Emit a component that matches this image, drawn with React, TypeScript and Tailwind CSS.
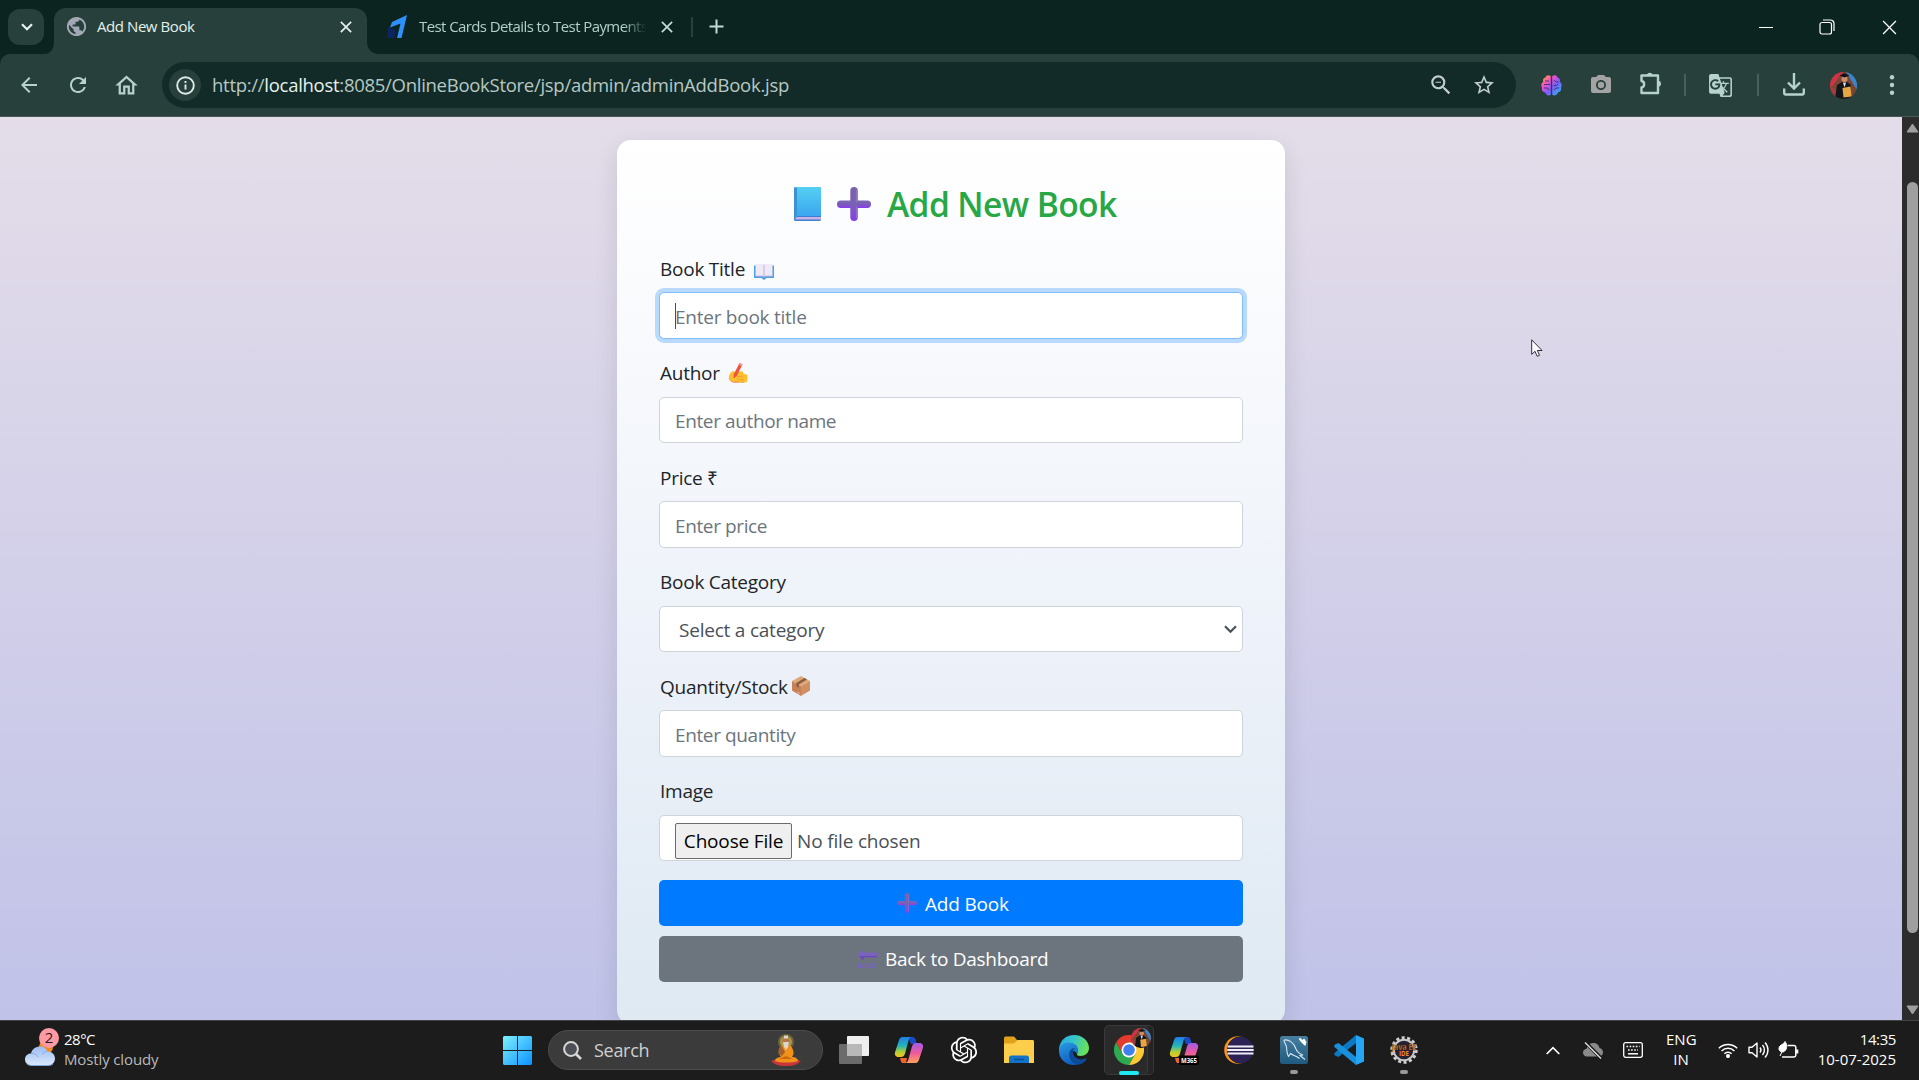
import type { ReactNode } from "react";
import {
  MdArrowBack,
  MdGTranslate,
  MdOutlineHome,
  MdPhotoCamera,
  MdPublic,
  MdRefresh,
  MdStarBorder,
  MdZoomOut,
} from "react-icons/md";
import { RiOpenaiFill } from "react-icons/ri";

function Cross({ size, width, color }: { size: number; width: number; color: string }) {
  return (
    <svg width={size} height={size} viewBox="0 0 14 14" stroke={color} strokeWidth={width} fill="none">
      <path d="M1 1l12 12M13 1L1 13" />
    </svg>
  );
}

/* ---------- emoji ---------- */

function PlusEmoji({ className }: { className: string }) {
  return (
    <svg className={className} viewBox="0 0 34 34">
      <defs>
        <linearGradient id="plusFill" x1="0" y1="0" x2="0" y2="1">
          <stop offset="0" stopColor="#7b62a8" />
          <stop offset="0.5" stopColor="#7a62b4" />
          <stop offset="1" stopColor="#8540ea" />
        </linearGradient>
        <linearGradient id="plusBar" x1="0" y1="0" x2="0" y2="1">
          <stop offset="0" stopColor="#7c6ab0" />
          <stop offset="0.5" stopColor="#7a5cba" />
          <stop offset="1" stopColor="#8a3df0" />
        </linearGradient>
      </defs>
      <rect x="0" y="13.500" width="34" height="7.500" rx="3.700" fill="url(#plusBar)" />
      <rect x="13.300" y="0" width="7.500" height="34" rx="3.700" fill="url(#plusFill)" />
      <path d="M19.500 3v12M19.500 20v11" stroke="#9a84cf" strokeWidth="1.200" strokeLinecap="round" opacity="0.600" />
    </svg>
  );
}

function BlueBook({ className }: { className: string }) {
  return (
    <svg className={className} viewBox="0 0 27 34">
      <defs>
        <linearGradient id="bookFill" x1="0" y1="0" x2="0" y2="1">
          <stop offset="0" stopColor="#54d0f2" />
          <stop offset="1" stopColor="#3ba6f0" />
        </linearGradient>
      </defs>
      <rect x="0" y="0" width="27" height="34" rx="1.600" fill="#3f7fcf" />
      <rect x="1.500" y="30" width="25.500" height="2.500" fill="#cbb2e6" />
      <rect x="1" y="0" width="26" height="29" rx="1.200" fill="url(#bookFill)" />
      <rect x="0" y="0.600" width="3" height="30" rx="1.200" fill="#3c93cf" />
    </svg>
  );
}

function OpenBook({ className }: { className: string }) {
  return (
    <svg className={className} viewBox="0 0 20 16">
      <path d="M0 1.500h20V14h-7.500l-2.500 2-2.500-2H0z" fill="#4b9fe3" />
      <path d="M1.500 0H9.300L10 .8l.7-.8h7.800v12.300h-7.200L10 13l-1.300-.7H1.500z" fill="#f0e9f8" />
      <path d="M10 .8V13" stroke="#c9badb" strokeWidth="1.200" />
      <path d="M1.500 12.200h7.200l1.300 1.200 1.300-1.200h7.200" stroke="#a7a3dc" fill="none" />
    </svg>
  );
}

function WritingHand({ className }: { className: string }) {
  return (
    <svg className={className} viewBox="0 0 20 20">
      <path d="M1 15.500C.5 12 2.500 8.500 5.500 8l3 1.500L13 8.200c2-.4 3 1 2 2.300l3.600 1.100c1.400.8 1 2 .6 2.800.8 1 .6 2-.2 2.600.5 1.400-.4 2.400-2 2.500L9 19.600C5 20 1.500 18.800 1 15.500z" fill="#fcbf2d" />
      <path d="M9 13.500l6 .3M9 16l7 .8M7 18.500l9 .8" stroke="#f29b3a" strokeWidth="0.900" />
      <path d="M11.500 0l3 1.500L8.800 13l-3.300 2.500.2-4z" fill="#ee5540" />
      <path d="M11.500 0l3 1.500-.9 1.800-3-1.500z" fill="#f58fa0" />
      <path d="M1 15.500C2.500 19 6 20 10 19.600" stroke="#f0938a" fill="none" strokeWidth="0.900" />
    </svg>
  );
}

function BoxEmoji({ className }: { className: string }) {
  return (
    <svg className={className} viewBox="0 0 18 20">
      <path d="M9 0l9 5-9 5.200L0 5z" fill="#dfa878" />
      <path d="M0 5l9 5.200V20l-9-5.500z" fill="#c98056" />
      <path d="M9 10.200L18 5v9.500L9 20z" fill="#d08f61" />
      <path d="M12.500 2L4.200 7v3.300l2.600 1.500V8.500L15 3.400z" fill="#8f5c43" />
      <path d="M5.500 15.500l2 1.200v1.500l-2-1.200z" fill="#e9b7c0" />
    </svg>
  );
}

function BackEmoji({ className }: { className: string }) {
  return (
    <svg className={className} viewBox="0 0 20 20">
      <path d="M0 5.800L6.500.2v3.300H20v4.800H6.500V11.500z" fill="#7a62bd" />
      <path d="M2 7.500l4.500 4V8.300H20V7H6.500z" fill="#6a48b8" />
      <text x="0.500" y="19" fontSize="7.500" fontWeight="600" textLength="19" lengthAdjust="spacingAndGlyphs" fill="#7a5fc6">
        BACK
      </text>
    </svg>
  );
}

/* ---------- browser frame ---------- */

function TabStrip() {
  return (
    <div className="flex h-[54px] items-start bg-[#0b2420] pt-2 pl-2">
      <button className="mt-px flex h-9 w-9 items-center justify-center rounded-[12px] bg-[#28403b]">
        <svg className="ml-px" width="12" height="8" viewBox="0 0 12 8" fill="none" stroke="#e8f3ef" strokeWidth="2.200">
          <path d="M1 1.200l5 5 5-5" />
        </svg>
      </button>
      <svg className="mt-[33px] h-[13px] w-[10px]" viewBox="0 0 10 13">
        <path d="M0 13C6 13 10 9 10 0v13z" fill="#28403b" />
      </svg>
      <div className="flex h-[46px] w-[313px] items-center rounded-t-[12px] bg-[#28403b] pr-[15px] pb-[9px] pl-[11px]">
        <MdPublic className="h-[23px] w-[23px] text-[#a3a9b4]" />
        <span className="ml-[9px] text-[15px] tracking-[-0.43px] whitespace-nowrap text-[#e3f0ec]">Add New Book</span>
        <span className="ml-auto">
          <Cross size={12} width={2} color="#e3f0ec" />
        </span>
      </div>
      <svg className="mt-[33px] h-[13px] w-[13px]" viewBox="0 0 13 13">
        <path d="M13 13C5 13 0 9 0 0v13z" fill="#28403b" />
      </svg>
      <div className="flex h-[37px] items-center pl-[7px]">
        <svg width="20" height="23" viewBox="0 0 20 23">
          <path d="M1 12l8 3-2 8H0z" fill="#0c2560" />
          <path d="M20 0l-5.500 23H10l3.500-14.500L3 12.500 5 7z" fill="#2f8ffb" />
        </svg>
        <span className="ml-3 w-[232px] text-[15px] tracking-[-0.59px] whitespace-nowrap text-[#b3cfc9] [mask-image:linear-gradient(to_right,black_88%,transparent_98%)]">
          Test Cards Details to Test Payments
        </span>
        <span className="ml-[10px]">
          <Cross size={12} width={2} color="#c0dcd5" />
        </span>
        <span className="ml-[18px] h-5 w-[2px] bg-[#28403b]" />
        <svg className="ml-4" width="15" height="15" viewBox="0 0 15 15" stroke="#c0dcd5" strokeWidth="2">
          <path d="M7.500 .5v14M.5 7.500h14" />
        </svg>
      </div>
      <div className="ml-auto flex h-[38px] items-center pr-[22px]">
        <span className="h-px w-[14px] bg-white" />
        <svg className="ml-[46px]" width="16" height="16" viewBox="0 0 16 16" fill="none" stroke="white" strokeWidth="1.200">
          <rect x="1" y="3.500" width="11.500" height="11.500" rx="2" />
          <path d="M4 1h7.500a3.500 3.500 0 0 1 3.500 3.500V12" />
        </svg>
        <span className="ml-[47px]">
          <Cross size={15} width={1.2} color="white" />
        </span>
      </div>
    </div>
  );
}

function BrainIcon() {
  return (
    <svg width="21" height="21" viewBox="0 0 21 21">
      <defs>
        <linearGradient id="brain" gradientUnits="userSpaceOnUse" x1="2" y1="2" x2="19" y2="19">
          <stop offset="0" stopColor="#ff9a3c" />
          <stop offset="0.300" stopColor="#ee4fd0" />
          <stop offset="0.600" stopColor="#7b5cff" />
          <stop offset="1" stopColor="#2fb0f5" />
        </linearGradient>
      </defs>
      <path d="M9.800 1.200C8-.3 5 .2 4.500 2.500 2 3 1.500 5.500 2.300 7 0 8 0 11 1 12.500c-.6 3 1 4.500 3 4.700.5 2.800 4 4.300 5.800 2.500z" fill="url(#brain)" />
      <path d="M11.200 1.200C13-.3 16 .2 16.500 2.500c2.500.5 3 3 2.200 4.500 2.300 1 2.300 4 1.300 5.500.6 3-1 4.500-3 4.700-.5 2.800-4 4.300-5.800 2.500z" fill="url(#brain)" />
      <path d="M4 6h4M3 9.500h6M3 13h3.500l1.500 2M13 5l2 2h2.500M12.500 10.500h3l1.500-1.500M13 15l2-2h3" stroke="#28305a" strokeWidth="0.800" fill="none" />
    </svg>
  );
}

function Avatar({ size, id }: { size: number; id: string }) {
  return (
    <svg width={size} height={size} viewBox="0 0 27 27">
      <clipPath id={id}>
        <circle cx="13.500" cy="13.500" r="13.500" />
      </clipPath>
      <g clipPath={`url(#${id})`}>
        <rect width="27" height="27" fill="#7a4634" />
        <path d="M0 0h13L0 17z" fill="#cf3346" />
        <path d="M16 0h11v18z" fill="#3a86cc" />
        <path d="M5 27l2-14 5-3h5l4 3v14z" fill="#15151c" />
        <path d="M0 13l6 6-2 8H0z" fill="#a33c40" />
        <circle cx="14.500" cy="7" r="3" fill="#c98f6c" />
        <path d="M9.500 3.500l5-2.200 5 2.200-5 2z" fill="#101016" />
        <path d="M13 10.500h3l-1.500 5z" fill="#e8e8ee" />
        <path d="M12.500 16l8-1.500 1 10-8 1z" fill="#e8a544" />
      </g>
    </svg>
  );
}

function Toolbar() {
  return (
    <div className="bg-[#0b2420]">
      <div className="flex h-[63px] items-center rounded-t-[10px] border-b border-[#47575a] bg-[#28403b] pl-[17px] text-[#b5d2cb]">
        <MdArrowBack className="h-6 w-6" />
        <MdRefresh className="ml-[25px] h-6 w-6" />
        <MdOutlineHome className="ml-[23px] h-[27px] w-[27px]" />
        <div className="ml-[22px] flex h-[46px] w-[1354px] items-center rounded-full bg-[#122b28] pr-[20px] pl-[7px]">
          <span className="flex h-8 w-8 items-center justify-center rounded-full bg-[#28403b]">
            <svg width="19" height="19" viewBox="0 0 19 19" fill="none" stroke="#dceae6" strokeWidth="1.900">
              <circle cx="9.500" cy="9.500" r="8.300" />
              <path d="M9.500 8.500v5M9.500 5v2" />
            </svg>
          </span>
          <span className="ml-[11px] text-[18.5px] tracking-[-0.28px] whitespace-nowrap text-[#b7c8c4]">
            http://<span className="text-[#e6f2ef]">localhost</span>:8085/OnlineBookStore/jsp/admin/adminAddBook.jsp
          </span>
          <MdZoomOut className="ml-auto h-[26px] w-[26px] text-[#c3cfcc]" />
          <MdStarBorder className="ml-[18px] h-6 w-6 text-[#c3cfcc]" />
        </div>
        <span className="ml-[25px]">
          <BrainIcon />
        </span>
        <MdPhotoCamera className="ml-[27px] h-[24px] w-[24px] text-[#a3a3a3]" />
        <svg className="mb-[4px] ml-[26px]" width="24" height="24" viewBox="0 0 24 24" fill="none" stroke="#b5d2cb" strokeWidth="2.400" strokeLinejoin="round">
          <path d="M2.500 4.500h16.500v17.500H2.500v-5.500c3.500-.5 3.500-6 0-6.500z" />
          <path d="M8.500 4a2.500 2.500 0 0 1 4.500 0zM19.500 10.500a2.300 2.300 0 0 1 0 4.500z" fill="#b5d2cb" strokeWidth="1.500" />
        </svg>
        <span className="ml-[21px] h-[22px] w-[2px] bg-[#46605b]" />
        <MdGTranslate className="ml-[22px] h-[25px] w-[25px]" />
        <span className="ml-[24px] h-[22px] w-[2px] bg-[#46605b]" />
        <svg className="mb-[2px] ml-[24px]" width="22" height="23" viewBox="0 0 22 23" fill="none" stroke="#b5d2cb" strokeWidth="2.400">
          <path d="M11 0v15M5 9.500l6 6 6-6" />
          <path d="M1.200 15.500v4.300c0 1 .6 1.700 1.700 1.700h16.200c1 0 1.700-.7 1.700-1.700v-4.300" />
        </svg>
        <span className="ml-[25px]">
          <Avatar size={27} id="avatarBar" />
        </span>
        <svg className="ml-[32px]" width="6" height="20" viewBox="0 0 6 20" fill="#b5d2cb">
          <circle cx="3" cy="2.300" r="2.200" />
          <circle cx="3" cy="10" r="2.200" />
          <circle cx="3" cy="17.700" r="2.200" />
        </svg>
      </div>
    </div>
  );
}

/* ---------- form ---------- */

function Field({ label, icon, children }: { label: string; icon?: ReactNode; children: ReactNode }) {
  return (
    <div className="h-[104.5px]">
      <label className="flex h-[38.4px] items-start pl-px text-[19px] leading-[29px] tracking-[-0.25px] text-[#212529]">
        <span className="mt-[0.6px] whitespace-pre">{label}</span>
        {icon}
      </label>
      {children}
    </div>
  );
}

function TextInput({ placeholder, focused }: { placeholder: string; focused?: boolean }) {
  return (
    <div className="relative h-[46px]">
      <input
        placeholder={placeholder}
        className={
          focused
            ? "block h-[47px] w-full rounded-[5px] border border-[#80bdff] bg-white px-[15px] pt-[2px] text-[19px] tracking-[-0.25px] ring-4 ring-[#b9d9fe] outline-none placeholder:text-[#6c757d]"
            : "block h-[46.5px] w-full rounded-[5px] border border-[#ced4da] bg-white px-[15px] pt-[2px] text-[19px] tracking-[-0.38px] outline-none placeholder:text-[#6c757d]"
        }
      />
      {focused && <span className="absolute top-[11px] left-4 h-[26px] w-px bg-[#495057]" />}
    </div>
  );
}

function BookForm() {
  return (
    <div className="h-[884px] w-[668px] rounded-[14px] bg-[linear-gradient(180deg,#ffffff_0%,#ecf1f9_60%,#dee9f2_100%)] px-[42px] shadow-[0_8px_24px_rgba(0,0,0,0.11)]">
      <h2 className="flex h-[114px] items-start justify-start pt-[47px] pl-[135px] text-[#28a745]">
        <BlueBook className="h-[34px] w-[27px]" />
        <PlusEmoji className="ml-4 h-[34px] w-[34px]" />
        <span className="mt-[-5px] ml-[16px] text-[33.6px] leading-[44px] font-semibold tracking-[-0.6px] whitespace-nowrap">
          Add New Book
        </span>
      </h2>
      <Field label="Book Title" icon={<OpenBook className="mt-[10px] ml-[9px] h-[16px] w-[20px]" />}>
        <TextInput placeholder="Enter book title" focused />
      </Field>
      <Field label="Author" icon={<WritingHand className="mt-[4px] ml-[8px] h-5 w-5" />}>
        <TextInput placeholder="Enter author name" />
      </Field>
      <Field label="Price ₹">
        <TextInput placeholder="Enter price" />
      </Field>
      <Field label="Book Category">
        <div className="flex h-[46px] items-center justify-between rounded-[5px] border border-[#ced4da] bg-white pt-px pr-[5px] pl-[19px] text-[19px] tracking-[-0.22px] text-[#495057]">
          <span className="mt-px">Select a category</span>
          <svg width="13" height="9" viewBox="0 0 13 9" fill="none" stroke="#495057" strokeWidth="2.200">
            <path d="M1 1.200l5.500 5.500 5.500-5.500" />
          </svg>
        </div>
      </Field>
      <Field label="Quantity/Stock" icon={<BoxEmoji className="mt-[4px] ml-[4px] h-5 w-[18px]" />}>
        <TextInput placeholder="Enter quantity" />
      </Field>
      <Field label="Image">
        <div className="flex h-[46px] items-start rounded-[5px] border border-[#ced4da] bg-white pt-[7px] pl-[15px] text-[19px] tracking-[-0.17px] text-[#495057]">
          <button className="h-9 w-[117px] rounded-[2px] border border-[#6b6b6b] bg-[#efefef] text-black">
            Choose File
          </button>
          <span className="ml-[5px] leading-[36px]">No file chosen</span>
        </div>
      </Field>
      <button className="mt-[-1px] flex h-[46px] w-full items-center justify-start rounded-[5px] bg-[#007bff] pl-[238px] text-[19px] text-white">
        <PlusEmoji className="h-5 w-5" />
        <span className="mt-[2px] ml-2 tracking-[-0.19px]">Add Book</span>
      </button>
      <button className="mt-[10px] flex h-[46px] w-full items-center justify-start rounded-[5px] bg-[#6c757d] pl-[198px] text-[19px] text-white">
        <BackEmoji className="h-5 w-5" />
        <span className="ml-[8px] tracking-[-0.28px]">Back to Dashboard</span>
      </button>
    </div>
  );
}

function Scrollbar() {
  return (
    <div className="flex w-[17px] flex-col items-end justify-between bg-[#2c2c2c] pt-[6px] pb-[5px]">
      <svg width="13" height="10" viewBox="0 0 13 10">
        <path d="M6.500 1L12 9H1z" fill="#9f9f9f" stroke="#9f9f9f" strokeLinejoin="round" />
      </svg>
      <div className="mt-[49px] mr-px mb-auto h-[751px] w-[11px] rounded-full bg-[#9f9f9f]" />
      <svg width="13" height="10" viewBox="0 0 13 10">
        <path d="M6.500 9L1 1h11z" fill="#9f9f9f" stroke="#9f9f9f" strokeLinejoin="round" />
      </svg>
    </div>
  );
}

/* ---------- taskbar ---------- */

function Slot({ children, dot }: { children: ReactNode; dot?: boolean }) {
  return (
    <div className="relative flex h-[59px] w-[55px] items-center justify-center">
      {children}
      {dot && <span className="absolute bottom-[6px] h-1 w-2 rounded-full bg-[#9a9a9a]" />}
    </div>
  );
}

function RibbonMark({ label }: { label?: boolean }) {
  return (
    <svg width="30" height="30" viewBox="0 0 30 30">
      <defs>
        <linearGradient id="ribbonCool" x1="0" y1="0" x2="0" y2="1">
          <stop offset="0" stopColor="#1f7fe8" />
          <stop offset="0.450" stopColor="#25b5b8" />
          <stop offset="0.750" stopColor="#b5cf30" />
          <stop offset="1" stopColor="#f4c320" />
        </linearGradient>
        <linearGradient id="ribbonWarm" x1="0" y1="0" x2="0" y2="1">
          <stop offset="0" stopColor="#a25be8" />
          <stop offset="0.500" stopColor="#ee5a9c" />
          <stop offset="1" stopColor="#ffa15a" />
        </linearGradient>
      </defs>
      <path d="M14 2h4.500c1.800 0 2.500 1 3 2.600L22.800 9H17z" fill="#1b4bc4" />
      <path d="M8 28c-1-1-1.500-3-2-5h7l-1 5z" fill="#f0622e" />
      <path d="M8.500 2H18c-2 0-2.800 1.200-3.400 3.300L11 18.500C10.300 21 9 22 7 22H4.500C1.500 22 .3 19.600 1.100 17L5 5.200C5.700 3 6.800 2 8.500 2z" fill="url(#ribbonCool)" />
      <path d="M21.500 28H10.500c2 0 3.200-1 3.800-3.200L18 11.500C18.700 9 20 8 22 8h3.500c3 0 4.200 2.400 3.400 5L25 24.800c-.7 2.200-1.800 3.200-3.500 3.200z" fill="url(#ribbonWarm)" />
      {label && (
        <>
          <rect x="10" y="20.500" width="20" height="9.500" rx="2" fill="#000" />
          <text x="12" y="28" fontSize="7" fontWeight="700" textLength="16" lengthAdjust="spacingAndGlyphs" fill="#fff">
            M365
          </text>
        </>
      )}
    </svg>
  );
}

function FolderIcon() {
  return (
    <svg width="30" height="28" viewBox="0 0 30 28">
      <path d="M0 2.500C0 1 .8.500 2 .500h8l3 3.500v4H0z" fill="#e0a11b" />
      <path d="M0 7.500h10L13.500 4H28.500c1 0 1.500.6 1.500 1.500V27H0z" fill="#fdce4b" />
      <path d="M5 22c0-1.700 1-2.500 2.500-2.500h15c1.500 0 2.500.8 2.500 2.500v5H5z" fill="#1173c9" />
      <path d="M10 23.500h10" stroke="#0b4f96" strokeWidth="1.500" />
    </svg>
  );
}

function EdgeIcon() {
  return (
    <svg width="30" height="30" viewBox="0 0 30 30">
      <defs>
        <linearGradient id="edgeTop" x1="0" y1="0" x2="1" y2="0.300">
          <stop offset="0" stopColor="#2aa6e0" />
          <stop offset="0.500" stopColor="#35c4cc" />
          <stop offset="1" stopColor="#66e05e" />
        </linearGradient>
        <linearGradient id="edgeLow" x1="0" y1="0" x2="0.600" y2="1">
          <stop offset="0" stopColor="#2a9be6" />
          <stop offset="1" stopColor="#0b58b8" />
        </linearGradient>
      </defs>
      <path d="M0 14C1 5 7 0 15 0c9 0 15 6.500 15 13 0 5-4 8-8.500 8-2.500 0-4-1-3.500-2 1.500-2 .8-7-5-7C7 12 2 14 0 17z" fill="url(#edgeTop)" />
      <path d="M0 15C1 10 5 7.500 9.500 7.500c5.500 0 9.500 3 9.500 7 0 2-1 3.500-1 4.500-1-2-3-3-4-3-1 5 4 9.500 9.500 8.500 2-.3 3.500-1 4-1.200C25 28 20 30 15 30 6 30-.5 23 0 15z" fill="url(#edgeLow)" />
      <path d="M10.500 17C9 23 13 29 19 29.500 24 29 27 25.500 28 23.500c-5 3-13 1.500-14-5.500-.3-2 .5-4 2-5-3 0-5 2-5.500 4z" fill="#0d4a9a" />
    </svg>
  );
}

function ChromeIcon() {
  return (
    <svg width="30" height="30" viewBox="0 0 30 30">
      <path d="M2 7.500A15 15 0 0 1 28 7.500H15L8.500 18.750z" fill="#e33b2e" />
      <path d="M15 30A15 15 0 0 1 2 7.500L8.500 18.750h13z" fill="#2da94f" />
      <path d="M15 7.500h13A15 15 0 0 1 15 30l6.500-11.250z" fill="#fcc934" />
      <circle cx="15" cy="15" r="7.500" fill="#fff" />
      <circle cx="15" cy="15" r="5.800" fill="#3f7ff0" />
    </svg>
  );
}

function EclipseIcon() {
  return (
    <svg width="30" height="28" viewBox="0 0 30 28">
      <circle cx="14" cy="14" r="13.800" fill="#f7941e" />
      <circle cx="16.500" cy="14" r="13.500" fill="#1c1c1c" />
      <ellipse cx="16.500" cy="14" rx="13.200" ry="13.200" fill="#2c2255" />
      <path d="M3.500 10.500h26M3.200 14h26.500M3.500 17.500h26" stroke="#f0eef8" strokeWidth="2" />
    </svg>
  );
}

function MysqlIcon() {
  return (
    <svg width="28" height="28" viewBox="0 0 28 28">
      <defs>
        <linearGradient id="mysql" x1="0" y1="0" x2="0" y2="1">
          <stop offset="0" stopColor="#477f9f" />
          <stop offset="1" stopColor="#1f5a80" />
        </linearGradient>
      </defs>
      <rect width="28" height="28" rx="2.500" fill="url(#mysql)" />
      <path d="M4 4c5-1 10 3 12 9 1.500 4 4 5 7 6l-3 .5 5 4M4 4c0 3 2 4 2.500 7 .5 4 0 6 2 9.500l2-3c2 2 6 2 9 5" fill="none" stroke="#d5e6ef" strokeWidth="1.100" />
      <path d="M20 3l2 2.200L24 4l1.500 2.500M21 4.500l4 4" stroke="#fff" strokeWidth="2" fill="none" strokeLinecap="round" />
    </svg>
  );
}

function CodeIcon() {
  return (
    <svg width="30" height="30" viewBox="0 0 30 30">
      <path d="M22 0l8 3.500v23L22 30z" fill="#26a5f2" />
      <path d="M22 0v8L4.500 22 1 20.500c-1-1-1-2 0-3z" fill="#0a78c2" />
      <path d="M22 30v-8L4.500 8 1 9.500c-1 1-1 2 0 3z" fill="#1890dc" />
    </svg>
  );
}

function JavaEeIcon() {
  return (
    <svg width="28" height="28" viewBox="0 0 28 28">
      <circle cx="14" cy="14" r="12.300" fill="none" stroke="#d0d0d0" strokeWidth="2.800" strokeDasharray="3.100 2.420" />
      <circle cx="14" cy="14" r="10.200" fill="#272033" stroke="#c9c9c9" strokeWidth="2" />
      <text x="1.500" y="13.500" fontSize="8" fontWeight="700" textLength="25" lengthAdjust="spacingAndGlyphs" fill="#f08a2c" stroke="#2a1608" strokeWidth="0.300">
        Java EE
      </text>
      <text x="9" y="20" fontSize="7.500" fontWeight="700" textLength="10" lengthAdjust="spacingAndGlyphs" fill="#f08a2c">
        IDE
      </text>
    </svg>
  );
}

function Weather() {
  return (
    <div className="flex w-[503px] items-center pl-[25px]">
      <div className="relative h-[36px] w-[34px]">
        <svg className="absolute top-[3px] left-0" width="30" height="30" viewBox="0 0 30 30">
          <defs>
            <linearGradient id="cloud" x1="0" y1="0" x2="0" y2="1">
              <stop offset="0" stopColor="#9dbdf2" />
              <stop offset="1" stopColor="#dbe8fb" />
            </linearGradient>
          </defs>
          <circle cx="21" cy="11" r="7" fill="#f08a1e" />
          <path d="M7 29.500c-4 0-7-2.500-7-6s2.500-6 6-6C7 13 11 10.500 15 10.500c4 0 6.500 2 7.500 5 4.500 0 7.500 3 7.500 7s-3 7-7 7z" fill="url(#cloud)" />
          <path d="M2 28c1.500 1 3 1.500 5 1.500h16c2 0 3.500-.5 5-1.500" stroke="#7fa3dc" fill="none" />
          <path d="M6 17.500c3-.5 6 1 7 3.500M22.500 15.500c-2.500 0-4.500 1-5.500 3" stroke="#87aae8" fill="none" />
        </svg>
        <span className="absolute top-[-5px] left-[14px] flex h-5 w-5 items-center justify-center rounded-full bg-[#ff99a2] text-[15px] leading-none text-[#2a1a1c]">
          2
        </span>
      </div>
      <div className="mb-[3px] ml-[5px] text-[15px] leading-5 whitespace-nowrap">
        <div className="tracking-[-0.5px] text-white">28°C</div>
        <div className="tracking-[-0.13px] text-[#b9b9b9]">Mostly cloudy</div>
      </div>
    </div>
  );
}

function Taskbar() {
  return (
    <div className="flex h-[60px] items-center border-t border-[#444444] bg-[#1c1c1c] font-['Open_Sans']">
      <Weather />
      <svg width="29" height="29" viewBox="0 0 29 29">
        <defs>
          <linearGradient id="start" x1="0" y1="0" x2="1" y2="1">
            <stop offset="0" stopColor="#7df0ff" />
            <stop offset="1" stopColor="#0a93ff" />
          </linearGradient>
        </defs>
        <path d="M1 0h13v14H0V1zM15 0h13l1 1v13H15zM0 15h14v14H1l-1-1zM15 15h14v13l-1 1H15z" fill="url(#start)" />
      </svg>
      <div className="mb-px ml-4 flex h-10 w-[275px] items-center rounded-full border border-[#4c4c4c] bg-[#3b3b3b] pr-[21px] pl-[14px]">
        <svg width="19" height="19" viewBox="0 0 19 19" fill="none" stroke="#d8d8d8" strokeWidth="2">
          <circle cx="8" cy="8" r="6.900" fill="#4c4f55" />
          <path d="M13 13l5 5" strokeWidth="2.600" />
        </svg>
        <span className="ml-3 text-[18px] tracking-[-0.3px] text-[#cfcfcf]">Search</span>
        <svg className="ml-auto" width="30" height="32" viewBox="0 0 30 32">
          <path d="M0 27c3-1 6-1.500 15-1.500S27 26 30 27c-3 3-7 5-15 5S3 30 0 27z" fill="#c8363a" />
          <circle cx="15" cy="8" r="8" fill="#6e6438" />
          <circle cx="15" cy="8" r="6" fill="#a8974e" />
          <path d="M4 27c0-3 4-4 6-4l-2-3c-1-4 1-8 4-8.500h6c3 .5 5 5 4.500 8.500L21 23c3 0 6 1.500 6 4-5 2-18 2-23 0z" fill="#f39218" />
          <path d="M8 20c-1.500-5 1-8 3-8l3 6-3 4z" fill="#a35f2c" />
          <path d="M8 25h14l-7-3z" fill="#c96a10" />
          <circle cx="15" cy="7" r="3.500" fill="#b5744a" />
          <path d="M12 8h6l-1 5-2 3-2-3zM13 1.500h4v3h-4z" fill="#ded6cc" />
        </svg>
      </div>
      <div className="mb-px ml-[3px] flex">
        <Slot>
          <svg width="30" height="28" viewBox="0 0 30 28">
            <rect x="8" y="0" width="22" height="20" rx="1" fill="#efefef" />
            <rect x="0" y="8" width="23" height="20" rx="1" fill="#6b6b6b" />
            <rect x="8" y="8" width="15" height="12" fill="#b8b8b8" />
          </svg>
        </Slot>
        <Slot>
          <RibbonMark />
        </Slot>
        <Slot>
          <RiOpenaiFill className="h-[32px] w-[32px] text-white" />
        </Slot>
        <Slot>
          <FolderIcon />
        </Slot>
        <Slot>
          <EdgeIcon />
        </Slot>
        <Slot>
          <span className="absolute top-[4px] left-[9px] h-[50px] w-[44px] rounded-[5px] border border-[#383838] bg-[#242424]" />
          <span className="absolute top-[4px] left-[3px] h-[50px] w-[44px] rounded-[5px] border border-[#3a3a3a] bg-[#2a2a2a]" />
          <span className="relative">
            <ChromeIcon />
          </span>
          <span className="absolute top-[7px] left-[30px]">
            <Avatar size={20} id="avatarTask" />
          </span>
          <span className="absolute bottom-[5px] left-[18px] h-1 w-5 rounded-full bg-[#1fe8f5]" />
        </Slot>
        <Slot>
          <RibbonMark label />
        </Slot>
        <Slot>
          <EclipseIcon />
        </Slot>
        <Slot dot>
          <MysqlIcon />
        </Slot>
        <Slot>
          <CodeIcon />
        </Slot>
        <Slot dot>
          <JavaEeIcon />
        </Slot>
      </div>
      <div className="mb-[3px] ml-auto flex items-center pr-[23px] text-[15px] leading-5 text-white">
        <svg className="mt-[2px]" width="14" height="9" viewBox="0 0 14 9" fill="none" stroke="#fff" strokeWidth="1.700">
          <path d="M.7 8L7 1.700 13.300 8" />
        </svg>
        <svg className="mt-[2px] ml-[23px]" width="20" height="18" viewBox="0 0 20 18">
          <path d="M4 15.500c-2.500 0-4-1.800-4-4 0-2 1.500-3.500 3.500-3.700C4.500 4 7 2 10.500 2c3.500 0 5.500 2 6 5 2 .3 3.500 2 3.500 4.300s-1.500 4.200-4 4.200z" fill="#8a8a8a" />
          <path d="M3 2l15 15" stroke="#1c1c1c" strokeWidth="3.500" />
          <path d="M2 1.500l16 16" stroke="#e6e6e6" strokeWidth="1.300" />
        </svg>
        <svg className="mt-[2px] ml-[20px]" width="20" height="16" viewBox="0 0 20 16" fill="none" stroke="#fff" strokeWidth="1.300">
          <rect x=".7" y=".7" width="18.600" height="14.600" rx="2" />
          <path d="M3.500 4.500h13" strokeDasharray="1.600 1.500" strokeWidth="1.700" />
          <path d="M5 8h10" strokeDasharray="1.600 1.500" strokeWidth="1.700" />
          <path d="M5 11.800h10" strokeWidth="1.500" />
        </svg>
        <div className="ml-[23px] w-[30px] text-center">
          <div>ENG</div>
          <div>IN</div>
        </div>
        <svg className="mt-[2px] ml-[22px]" width="20" height="16" viewBox="0 0 20 16" fill="none" stroke="#fff" strokeWidth="1.500">
          <path d="M.8 6.200a13 13 0 0 1 18.400 0M3.600 9a9 9 0 0 1 12.800 0M6.400 11.800a5 5 0 0 1 7.200 0" />
          <circle cx="10" cy="14" r="1.300" fill="#fff" />
        </svg>
        <svg className="mt-[2px] ml-[10px]" width="21" height="18" viewBox="0 0 21 18" fill="none" stroke="#fff" strokeWidth="1.400">
          <path d="M1 6.300h3L9 2v14L4 11.700H1z" strokeLinejoin="round" />
          <path d="M12 6.500a4 4 0 0 1 0 5M14.500 4a7.500 7.500 0 0 1 0 10M17 1.500a11 11 0 0 1 0 15" />
        </svg>
        <svg className="mt-px ml-[9px]" width="21" height="18" viewBox="0 0 21 18" fill="none" stroke="#fff" strokeWidth="1.500">
          <path d="M9.500 4.500H16a1.800 1.800 0 0 1 1.800 1.800v8A1.800 1.800 0 0 1 16 16H4" />
          <path d="M19.200 8.500v4" strokeWidth="2.200" />
          <path d="M7 .5c2.500 3 2.500 9-2 10.500C0 11 0 6 3 4.200 5 3 6 2.200 7 .5zM4 10.500L2 15" fill="#fff" strokeWidth="1" />
        </svg>
        <div className="w-[97px] text-right">
          <div className="tracking-[-0.4px]">14:35</div>
          <div>10-07-2025</div>
        </div>
      </div>
    </div>
  );
}

export default function App() {
  return (
    <div className="flex h-[1080px] w-[1919px] flex-col overflow-hidden font-['Open_Sans',sans-serif]">
      <TabStrip />
      <Toolbar />
      <div className="relative flex h-[903px] overflow-hidden">
        <main className="flex flex-1 items-start justify-center bg-[linear-gradient(180deg,#e4dde9_0%,#c0c2e8_100%)] pt-[23px]">
          <BookForm />
        </main>
        <Scrollbar />
        <svg className="absolute top-[222px] left-[1531px]" width="13" height="20" viewBox="0 0 13 20">
          <path d="M.7 .8v14.500l3.300-3 2.200 5 2.300-1-2.200-4.800h4.700z" fill="#fff" stroke="#1a1a2a" strokeWidth="0.900" />
        </svg>
      </div>
      <Taskbar />
    </div>
  );
}
